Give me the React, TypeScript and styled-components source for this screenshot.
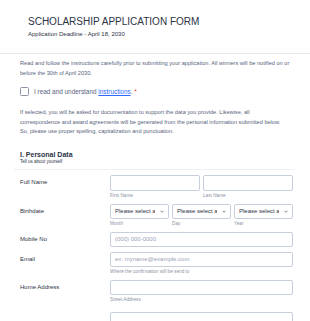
import * as React from 'react';
import styled, { createGlobalStyle } from 'styled-components';

const GlobalStyle = createGlobalStyle`
  html, body {
    margin: 0;
    padding: 0;
    background: #ffffff;
  }
  body {
    font-family: "Liberation Sans", Arial, sans-serif;
    font-size: 6px;
    color: #2c3345;
  }
`;

const Header = styled.header`
  padding: 16px 28px 15px;
  border-bottom: 1px solid #e8e8ee;
`;

const Title = styled.h1`
  margin: 0;
  font-size: 10px;
  line-height: 12px;
  font-weight: 400;
  color: #2c3345;
`;

const Subtitle = styled.div`
  margin-top: 2px;
  font-size: 6px;
  line-height: 8px;
  color: #2c3345;
`;

const Content = styled.main`
  margin: 0 15px 0 14px;
  padding: 0 2px 0 6px;
`;

const Paragraph = styled.p<{ $top: number }>`
  margin: ${(p) => p.$top}px 0 0;
  font-size: 5.6px;
  line-height: 9.5px;
  color: #57647e;
`;

const CheckRow = styled.label`
  display: flex;
  align-items: center;
  gap: 5px;
  margin-top: 8px;
  height: 10px;
  font-size: 6.4px;
  color: #57647e;
`;

const Box = styled.span`
  width: 7px;
  height: 7px;
  border: 1px solid #8d96a8;
  border-radius: 1.5px;
  background: #fff;
`;

const Link = styled.a`
  color: #2e69ff;
  text-decoration: underline;
`;

const Required = styled.span`
  color: #f23a3c;
`;

const SectionTitle = styled.h2`
  margin: 13px 0 0;
  font-size: 7px;
  line-height: 9px;
  font-weight: 700;
  color: #2c3345;
`;

const SectionSub = styled.div`
  font-size: 4.5px;
  line-height: 6px;
  color: #2c3345;
`;

const Divider = styled.hr`
  margin: 4px -2px 5px -6px;
  border: 0;
  border-top: 1px solid #eef0f4;
`;

const Row = styled.div`
  display: grid;
  grid-template-columns: 90px 183px;
  margin-bottom: 5px;
`;

const Label = styled.div`
  font-size: 6px;
  line-height: 15px;
  color: #2c3345;
`;

const Inputs = styled.div<{ $cols: number }>`
  display: grid;
  grid-template-columns: repeat(${(p) => p.$cols}, 1fr);
  column-gap: 3px;
`;

const Cell = styled.div`
  display: flex;
  flex-direction: column;
  min-width: 0;
`;

const Input = styled.input<{ $h?: number; $gap?: number }>`
  display: block;
  box-sizing: border-box;
  width: 100%;
  height: ${(p) => p.$h ?? 15}px;
  margin: ${(p) => p.$gap ?? 0}px 0 0;
  padding: 0 4px;
  border: 1px solid #c8cfdc;
  border-radius: 2px;
  font-family: inherit;
  font-size: 6px;
  color: #2c3345;
  background: #fff;
  &::placeholder {
    color: #9aa3b5;
  }
`;

const SelectWrap = styled.div`
  position: relative;
`;

const Select = styled.select`
  display: block;
  box-sizing: border-box;
  appearance: none;
  -webkit-appearance: none;
  width: 100%;
  height: 15px;
  margin: 0;
  padding: 0 13px 0 4px;
  border: 1px solid #c8cfdc;
  border-radius: 2px;
  font-family: inherit;
  font-size: 6px;
  color: #2c3345;
  background: #fff;
`;

const Chevron = styled.svg`
  position: absolute;
  right: 5px;
  top: 6px;
  width: 4px;
  height: 3px;
  pointer-events: none;
`;

const SubLabel = styled.span`
  margin-top: 2px;
  font-size: 4.7px;
  line-height: 6px;
  color: #8a93a6;
`;

const Dropdown = ({ label }: { label: string }) => (
  <SelectWrap>
    <Select defaultValue="">
      <option value="">Please select a {label}</option>
    </Select>
    <Chevron viewBox="0 0 8 5">
      <path d="M1 1l3 3 3-3" fill="none" stroke="#2c3345" strokeWidth="1.2" />
    </Chevron>
  </SelectWrap>
);

export default function App() {
  return (
    <>
      <GlobalStyle />
      <Header>
        <Title>SCHOLARSHIP APPLICATION FORM</Title>
        <Subtitle>Application Deadline - April 18, 2030</Subtitle>
      </Header>
      <Content>
        <Paragraph $top={5}>
          Read and follow the instructions carefully prior to submitting your application. All
          winners will be notified on or before the 30th of April 2030.
        </Paragraph>
        <CheckRow>
          <Box />
          <span>
            I read and understand <Link href="#">instructions</Link>. <Required>*</Required>
          </span>
        </CheckRow>
        <Paragraph $top={12}>
          If selected, you will be asked for documentation to support the data you provide.
          Likewise, all
          <br />
          correspondence and award agreements will be generated from the personal information
          submitted below.
          <br />
          So, please use proper spelling, capitalization and punctuation.
        </Paragraph>
        <SectionTitle>I. Personal Data</SectionTitle>
        <SectionSub>Tell us about yourself</SectionSub>
        <Divider />

        <Row>
          <Label>Full Name</Label>
          <Inputs $cols={2}>
            <Cell>
              <Input $h={16} />
              <SubLabel>First Name</SubLabel>
            </Cell>
            <Cell>
              <Input $h={16} />
              <SubLabel>Last Name</SubLabel>
            </Cell>
          </Inputs>
        </Row>

        <Row>
          <Label>Birthdate</Label>
          <Inputs $cols={3}>
            <Cell>
              <Dropdown label="month" />
              <SubLabel>Month</SubLabel>
            </Cell>
            <Cell>
              <Dropdown label="day" />
              <SubLabel>Day</SubLabel>
            </Cell>
            <Cell>
              <Dropdown label="year" />
              <SubLabel>Year</SubLabel>
            </Cell>
          </Inputs>
        </Row>

        <Row>
          <Label>Mobile No</Label>
          <Inputs $cols={1}>
            <Input placeholder="(000) 000-0000" />
          </Inputs>
        </Row>

        <Row>
          <Label>Email</Label>
          <Inputs $cols={1}>
            <Cell>
              <Input placeholder="ex: myname@example.com" />
              <SubLabel>Where the confirmation will be send to</SubLabel>
            </Cell>
          </Inputs>
        </Row>

        <Row>
          <Label>Home Address</Label>
          <Inputs $cols={1}>
            <Cell>
              <Input />
              <SubLabel>Street Address</SubLabel>
              <Input $gap={9} />
            </Cell>
          </Inputs>
        </Row>
      </Content>
    </>
  );
}
